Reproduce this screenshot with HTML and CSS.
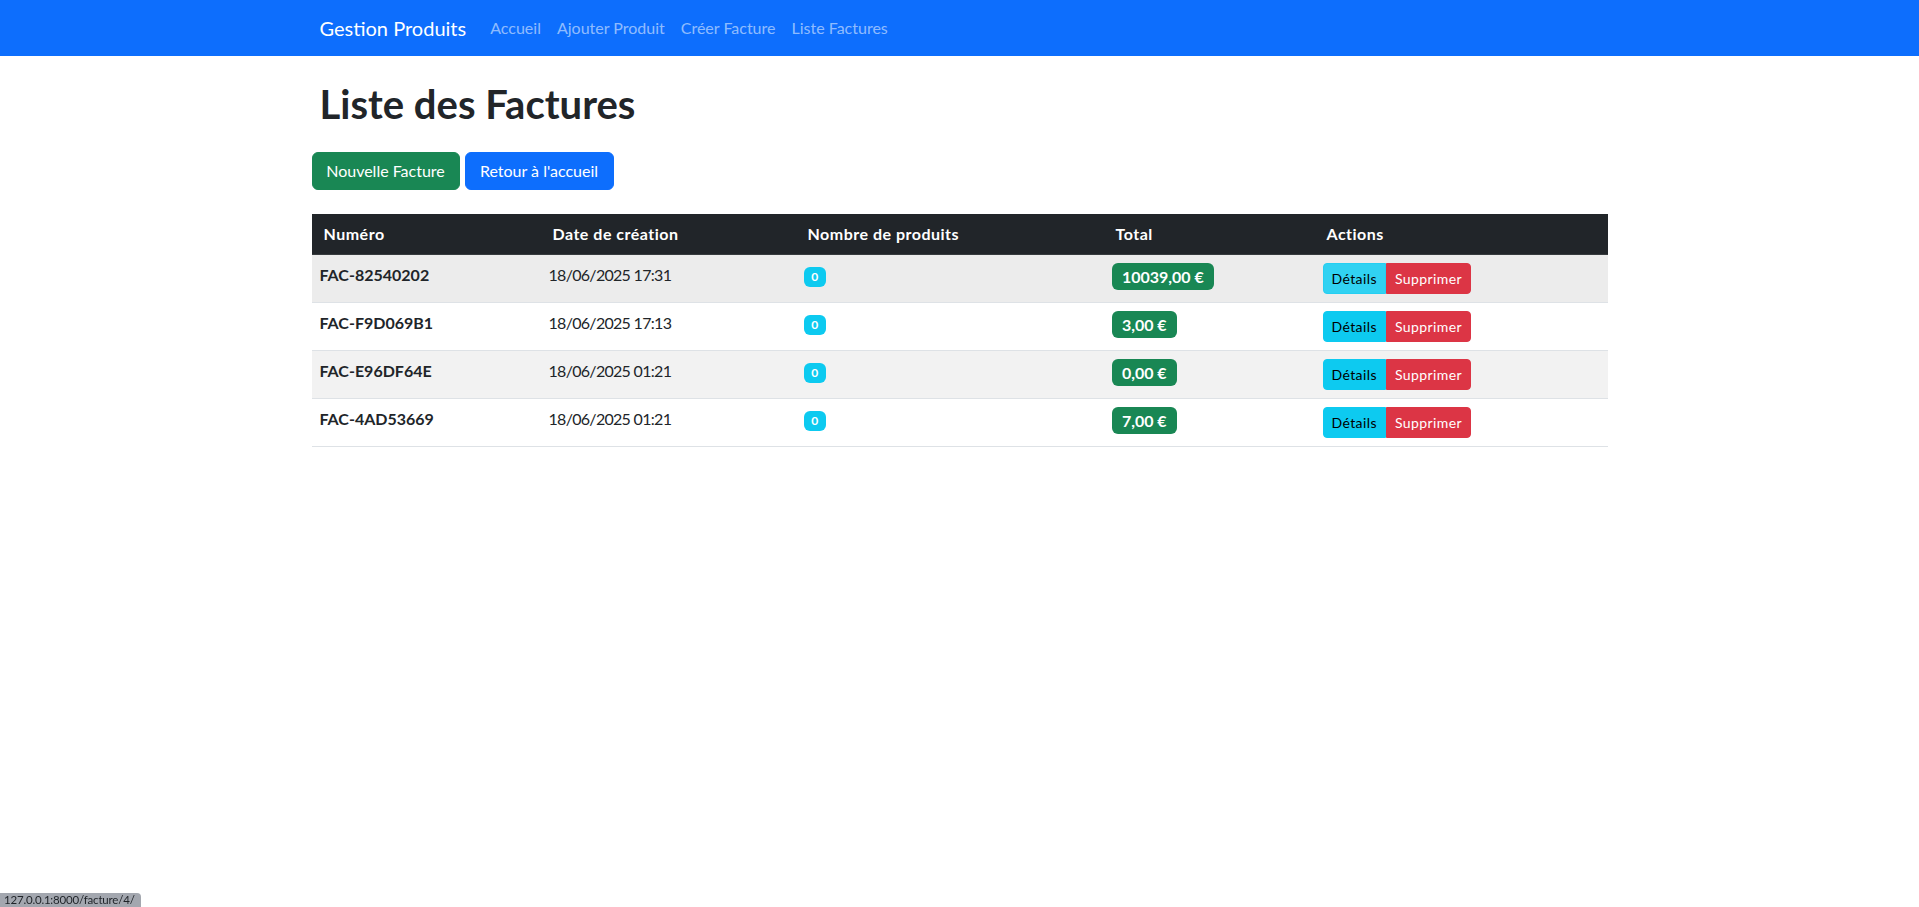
FILE: index.html
```html
<!DOCTYPE html>
<html lang="fr">
<head>
<meta charset="utf-8">
<title>Liste des Factures</title>
<link rel="stylesheet" href="styles.css">
</head>
<body>
<nav class="navbar">
  <div class="container nav-inner">
    <a class="brand" href="#">Gestion Produits</a>
    <ul class="nav-links">
      <li><a class="nav-link" href="#">Accueil</a></li>
      <li><a class="nav-link" href="#">Ajouter Produit</a></li>
      <li><a class="nav-link" href="#">Créer Facture</a></li>
      <li><a class="nav-link" href="#">Liste Factures</a></li>
    </ul>
  </div>
</nav>

<main class="container main">
  <h1 class="title">Liste des Factures</h1>
  <div class="toolbar">
    <a class="btn btn-success" href="#">Nouvelle Facture</a>
    <a class="btn btn-primary" href="#">Retour à l'accueil</a>
  </div>

  <table class="table">
    <colgroup>
      <col class="c-num"><col class="c-date"><col class="c-nb"><col class="c-total"><col class="c-act">
    </colgroup>
    <thead>
      <tr>
        <th>Numéro</th>
        <th>Date de création</th>
        <th>Nombre de produits</th>
        <th>Total</th>
        <th>Actions</th>
      </tr>
    </thead>
    <tbody>
      <tr class="row-hover">
        <td><strong>FAC-82540202</strong></td>
        <td class="date">18/06/2025 17:31</td>
        <td><span class="badge badge-info">0</span></td>
        <td><span class="badge badge-total">10039,00 €</span></td>
        <td><div class="btn-group"><a class="btn-sm btn-info btn-info-hover" href="#">Détails</a><a class="btn-sm btn-danger" href="#">Supprimer</a></div></td>
      </tr>
      <tr>
        <td><strong>FAC-F9D069B1</strong></td>
        <td class="date">18/06/2025 17:13</td>
        <td><span class="badge badge-info">0</span></td>
        <td><span class="badge badge-total">3,00 €</span></td>
        <td><div class="btn-group"><a class="btn-sm btn-info" href="#">Détails</a><a class="btn-sm btn-danger" href="#">Supprimer</a></div></td>
      </tr>
      <tr class="row-striped">
        <td><strong>FAC-E96DF64E</strong></td>
        <td class="date">18/06/2025 01:21</td>
        <td><span class="badge badge-info">0</span></td>
        <td><span class="badge badge-total">0,00 €</span></td>
        <td><div class="btn-group"><a class="btn-sm btn-info" href="#">Détails</a><a class="btn-sm btn-danger" href="#">Supprimer</a></div></td>
      </tr>
      <tr>
        <td><strong>FAC-4AD53669</strong></td>
        <td class="date">18/06/2025 01:21</td>
        <td><span class="badge badge-info">0</span></td>
        <td><span class="badge badge-total">7,00 €</span></td>
        <td><div class="btn-group"><a class="btn-sm btn-info" href="#">Détails</a><a class="btn-sm btn-danger" href="#">Supprimer</a></div></td>
      </tr>
    </tbody>
  </table>
</main>

<div class="status-bar">127.0.0.1:8000/facture/4/</div>
</body>
</html>
```
FILE: styles.css
```css
* { box-sizing: border-box; }

body {
  margin: 0;
  font-family: Lato, "Noto Sans", sans-serif;
  font-size: 16px;
  line-height: 1.5;
  color: #212529;
  background: #fff;
}

a { text-decoration: none; }

.container {
  width: 1320px;
  margin: 0 auto;
  padding: 0 12px;
}

/* Navbar */
.navbar {
  background: #0d6efd;
  padding: 8px 0;
}
.nav-inner {
  display: flex;
  align-items: center;
}
.brand {
  color: #fff;
  font-size: 20px;
  line-height: 30px;
  padding: 5px 0;
  margin-left: 8px;
  margin-right: 16px;
}
.nav-links {
  display: flex;
  list-style: none;
  margin: 0;
  padding: 0;
}
.nav-link {
  display: block;
  padding: 8px;
  line-height: 24px;
  color: rgba(255, 255, 255, 0.55);
}

/* Main */
.main {
  padding-top: 24px;
}
.title {
  font-size: 40px;
  font-weight: 700;
  line-height: 1.2;
  margin: 0 0 24px;
  padding-left: 8px;
}
.toolbar {
  display: flex;
  gap: 5px;
  margin-bottom: 24px;
}
.btn {
  display: inline-block;
  padding: 6px 12px;
  font-size: 16px;
  line-height: 24px;
  border: 1px solid transparent;
  border-radius: 6px;
  color: #fff;
  text-align: center;
}
.btn-success { background: #198754; border-color: #198754; width: 148px; }
.btn-primary { background: #0d6efd; border-color: #0d6efd; width: 149px; }

/* Table */
.table {
  width: 100%;
  border-collapse: collapse;
  table-layout: fixed;
  vertical-align: top;
}
.c-num { width: 229px; }
.c-date { width: 255px; }
.c-nb { width: 308px; }
.c-total { width: 211px; }
.c-act { width: 293px; }

.table th {
  background: #212529;
  color: #fff;
  font-weight: 700;
  text-align: left;
  padding: 8px 8px 8px 12px;
  border-bottom: 1px solid #373b3e;
  line-height: 24px;
  letter-spacing: 0.5px;
}
.table td {
  padding: 8px;
  border-bottom: 1px solid #dee2e6;
  line-height: 24px;
  vertical-align: top;
}
.row-hover td { background: #ececec; }
.row-striped td { background: #f2f2f2; }

.date { letter-spacing: -0.7px; }

.badge {
  display: inline-block;
  font-weight: 700;
  line-height: 1;
  color: #fff;
  white-space: nowrap;
  border-radius: 6px;
  vertical-align: baseline;
}
.badge-info {
  background: #0dcaf0;
  font-size: 12px;
  padding: 4.2px 7.8px;
}
.badge-total {
  background: #198754;
  font-size: 16px;
  padding: 5.6px 10.4px;
}

.btn-group {
  display: inline-flex;
  vertical-align: middle;
}
.btn-sm {
  display: inline-block;
  padding: 4px 8px;
  font-size: 14px;
  line-height: 21px;
  border: 1px solid transparent;
  letter-spacing: 0.4px;
}
.btn-info {
  background: #0dcaf0;
  border-color: #0dcaf0;
  color: #000;
  border-radius: 4px 0 0 4px;
}
.btn-info-hover {
  background: #31d2f2;
  border-color: #25cff2;
}
.btn-danger {
  background: #dc3545;
  border-color: #dc3545;
  color: #fff;
  border-radius: 0 4px 4px 0;
}

/* Browser status bar overlay */
.status-bar {
  position: fixed;
  left: 0;
  bottom: 0;
  height: 14px;
  padding: 0 6px 0 4px;
  background: #a3a7af;
  color: #1f2328;
  font-size: 11.5px;
  line-height: 14px;
  letter-spacing: -0.2px;
  border-top-right-radius: 4px;
}
```
